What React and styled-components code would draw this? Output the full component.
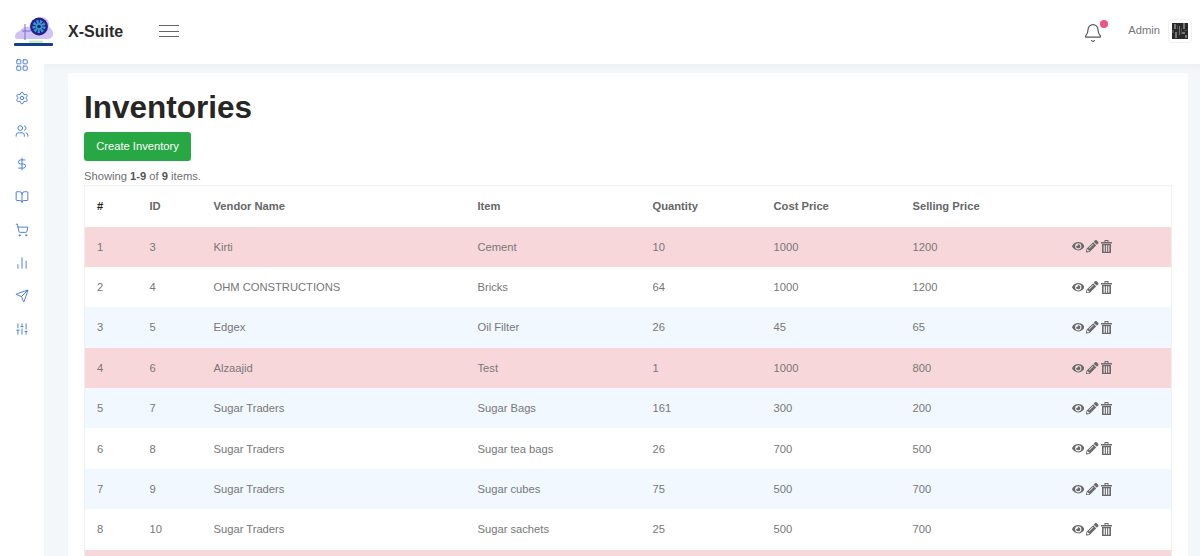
import styled, { createGlobalStyle } from 'styled-components';
import { BarChart2, Bell, BookOpen, DollarSign, LayoutGrid, Send, Settings, ShoppingCart, SlidersVertical, Users } from 'lucide-react';
import { FaEye, FaPencilAlt } from 'react-icons/fa';

const GlobalStyle = createGlobalStyle`
    html, body {
        margin: 0;
        height: 100%;
        overflow: hidden;
        background: #fff;
        font-family: "Liberation Sans", Arial, sans-serif;
    }
`;

const Shell = styled.div`
    display: grid;
    grid-template-columns: 44px 1fr;
    grid-template-rows: 58px 1fr;
    height: 556px;
    overflow: hidden;
`;

const Header = styled.header`
    grid-column: 1 / 3;
    display: flex;
    align-items: center;
    padding: 4px 8px 0 14px;
    background: #fff;
`;

const Brand = styled.div`
    font-size: 16px;
    font-weight: 700;
    color: #2b2b2b;
    margin: 2px 0 0 14px;
`;

const Burger = styled.button`
    display: flex;
    flex-direction: column;
    gap: 4.5px;
    width: 20px;
    margin-left: 36px;
    padding: 0;
    border: 0;
    background: none;

    span {
        height: 1px;
        background: #666;
    }
`;

const UserArea = styled.div`
    display: flex;
    align-items: center;
    margin-left: auto;
`;

const BellWrap = styled.div`
    position: relative;
    display: flex;
    color: #555;
    margin: 4px 25px 0 0;

    &::after {
        content: "";
        position: absolute;
        top: -3px;
        right: -5px;
        width: 8px;
        height: 8px;
        border-radius: 50%;
        background: #f0508a;
    }
`;

const UserName = styled.span`
    font-size: 11.2px;
    color: #777;
    margin: -2px 8px 0 0;
`;

const Avatar = styled.div`
    display: flex;
    align-items: center;
    justify-content: center;
    width: 22px;
    height: 22px;
    border: 1px solid #f0f0f0;
    border-radius: 4px;
`;

const Sidebar = styled.nav`
    display: flex;
    flex-direction: column;
    align-items: center;
    gap: 19px;
    padding: 0 1px 0 0;
    background: #fff;
    color: #4277dc;
`;

const Main = styled.main`
    margin-top: 6px;
    background: #f4f7fa;
    padding: 9px 12px 0 24px;
    box-shadow: inset 0 6px 6px -4px rgba(0, 0, 0, 0.04);
`;

const Card = styled.section`
    background: #fff;
    padding: 16px 16px 0;
    height: 100%;
`;

const Title = styled.h1`
    margin: 0;
    font-size: 31.5px;
    line-height: 37px;
    font-weight: 700;
    color: #262626;
`;

const CreateButton = styled.button`
    display: block;
    width: 107px;
    height: 29px;
    margin-top: 6px;
    padding: 0 0 1px;
    border: 0;
    border-radius: 3px;
    background: #28a745;
    color: #fff;
    font: 11.2px "Liberation Sans", Arial, sans-serif;
`;

const Summary = styled.div`
    margin-top: 8px;
    height: 16px;
    font-size: 11.2px;
    line-height: 15px;
    color: #6f6f6f;

    b {
        color: #555;
    }
`;

const Table = styled.table`
    width: 1087px;
    border-collapse: collapse;
    table-layout: fixed;
    font-size: 11.2px;
    border-left: 1px solid #f0f0f0;
    border-right: 1px solid #f0f0f0;
`;

const HeadCell = styled.th`
    box-sizing: border-box;
    height: 41px;
    padding: 0 12px 1px;
    text-align: left;
    color: ${({ $dark }) => ($dark ? '#222' : '#666')};
    border-top: 1px solid #f0f0f0;
`;

const toneColors = {
    danger: '#f8d7da',
    info: '#f1f8ff',
    plain: '#fff',
};

const Row = styled.tr`
    height: 40.4px;
    background: ${({ $tone }) => toneColors[$tone]};
`;

const Cell = styled.td`
    padding: 0 12px;
    color: #777;
`;

const Actions = styled.div`
    display: flex;
    align-items: center;
    gap: 2px;
    margin-left: 12px;
    color: #6a6a6a;
    font-size: 12.5px;
`;

const columns = [53, 64, 264, 175, 121, 139, 147, 124];
const headings = ['#', 'ID', 'Vendor Name', 'Item', 'Quantity', 'Cost Price', 'Selling Price', ''];

const rows = [
    { id: 3, vendor: 'Kirti', item: 'Cement', qty: 10, cost: 1000, sell: 1200, tone: 'danger' },
    { id: 4, vendor: 'OHM CONSTRUCTIONS', item: 'Bricks', qty: 64, cost: 1000, sell: 1200, tone: 'plain' },
    { id: 5, vendor: 'Edgex', item: 'Oil Filter', qty: 26, cost: 45, sell: 65, tone: 'info' },
    { id: 6, vendor: 'Alzaajid', item: 'Test', qty: 1, cost: 1000, sell: 800, tone: 'danger' },
    { id: 7, vendor: 'Sugar Traders', item: 'Sugar Bags', qty: 161, cost: 300, sell: 200, tone: 'info' },
    { id: 8, vendor: 'Sugar Traders', item: 'Sugar tea bags', qty: 26, cost: 700, sell: 500, tone: 'plain' },
    { id: 9, vendor: 'Sugar Traders', item: 'Sugar cubes', qty: 75, cost: 500, sell: 700, tone: 'info' },
    { id: 10, vendor: 'Sugar Traders', item: 'Sugar sachets', qty: 25, cost: 500, sell: 700, tone: 'plain' },
];

const navIcons = [LayoutGrid, Settings, Users, DollarSign, BookOpen, ShoppingCart, BarChart2, Send, SlidersVertical];

function Logo() {
    return (
        <svg width="40" height="32" viewBox="0 0 40 32">
            <path d="M1 22 Q1 17 6 16 Q9 11 15 12 Q18 3 27 2 Q34 2 35 9 Q35 12 36 13 Q40 16 39 20 Q38 24 33 24 L4 24 Q1 24 1 22Z" fill="#cfc4f2" />
            <circle cx="25" cy="11.5" r="9" fill="#2a1f8f" />
            <circle cx="25" cy="11.5" r="5" fill="none" stroke="#2f9fd0" strokeWidth="3" strokeDasharray="2.2 1.2" />
            <circle cx="25" cy="11.5" r="3.4" fill="#2f9fd0" />
            <circle cx="25" cy="11.5" r="1.8" fill="#1a1a6a" />
            <path d="M11 9V25M8 16H17" stroke="#7a6fc8" strokeWidth="1" fill="none" />
            <rect x="0" y="28" width="39" height="3" rx="1" fill="#123f8f" />
            <rect x="15" y="25.5" width="14" height="2.5" fill="#c7ecc0" />
        </svg>
    );
}

function AvatarPicture() {
    return (
        <svg width="16" height="16" viewBox="0 0 16 16">
            <rect width="16" height="16" fill="#2a2a2a" />
            <path d="M2 1h2v5H2zM7 3h1v9H7zM11 0h2v6h-2zM3 9h2v6H3zM10 9h3v2h-3zM13 12h2v3h-2z" fill="#777" />
            <path d="M5 2h1v4H5zM9 5h1v6H9zM0 7h2v3H0zM12 7h3v1h-3z" fill="#4c4c4c" />
        </svg>
    );
}

function TrashIcon() {
    return (
        <svg width="11" height="13" viewBox="0 0 11 13" fill="currentColor">
            <path d="M0 2h11v1.4H0zM3.5 0h4v2h-1V1h-2v1h-1z" />
            <path fillRule="evenodd" d="M1 4h9v9H1zM2.6 5.2v6.6h1.2V5.2zM4.9 5.2v6.6h1.2V5.2zM7.2 5.2v6.6h1.2V5.2z" />
        </svg>
    );
}

export default function App() {
    return (
        <Shell>
            <GlobalStyle />
            <Header>
                <Logo />
                <Brand>X-Suite</Brand>
                <Burger><span /><span /><span /></Burger>
                <UserArea>
                    <BellWrap><Bell size={20} strokeWidth={1.4} /></BellWrap>
                    <UserName>Admin</UserName>
                    <Avatar><AvatarPicture /></Avatar>
                </UserArea>
            </Header>
            <Sidebar>
                {navIcons.map((Icon, i) => <Icon key={i} size={14} strokeWidth={1.6} />)}
            </Sidebar>
            <Main>
                <Card>
                    <Title>Inventories</Title>
                    <CreateButton>Create Inventory</CreateButton>
                    <Summary>Showing <b>1-9</b> of <b>9</b> items.</Summary>
                    <Table>
                        <colgroup>
                            {columns.map((w, i) => <col key={i} width={w} />)}
                        </colgroup>
                        <thead>
                            <tr>
                                {headings.map((h, i) => <HeadCell key={i} $dark={i === 0}>{h}</HeadCell>)}
                            </tr>
                        </thead>
                        <tbody>
                            {rows.map((r, i) => (
                                <Row key={r.id} $tone={r.tone}>
                                    <Cell>{i + 1}</Cell>
                                    <Cell>{r.id}</Cell>
                                    <Cell>{r.vendor}</Cell>
                                    <Cell>{r.item}</Cell>
                                    <Cell>{r.qty}</Cell>
                                    <Cell>{r.cost}</Cell>
                                    <Cell>{r.sell}</Cell>
                                    <Cell>
                                        <Actions><FaEye /><FaPencilAlt /><TrashIcon /></Actions>
                                    </Cell>
                                </Row>
                            ))}
                            <Row $tone="danger"><Cell colSpan={8} /></Row>
                        </tbody>
                    </Table>
                </Card>
            </Main>
        </Shell>
    );
}
